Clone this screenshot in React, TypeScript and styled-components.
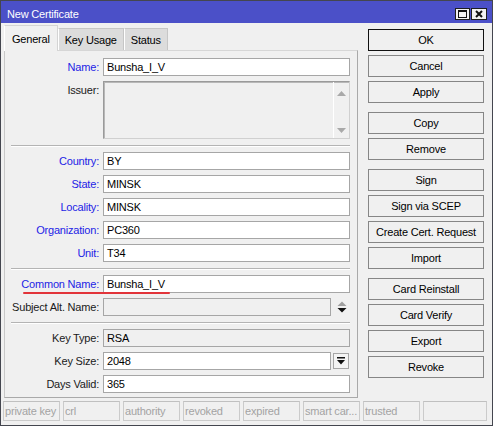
import styled, { createGlobalStyle } from 'styled-components';

const GlobalStyle = createGlobalStyle`
  html, body {
    margin: 0;
    padding: 0;
    background: #ffffff;
  }
  body {
    font-family: "Liberation Sans", Arial, sans-serif;
  }
`;

const Window = styled.div`
  width: 493px;
  height: 426px;
  box-sizing: border-box;
  border: 1px solid #44464f;
  background: #f0f0f0;
  display: flex;
  flex-direction: column;
  font-size: 11px;
  letter-spacing: -0.2px;
  color: #000;
  overflow: hidden;
`;

const TitleBar = styled.div`
  height: 22px;
  flex-shrink: 0;
  background: #4b50c8;
  display: flex;
  align-items: flex-end;
  padding: 0 5px 1px 6px;
  box-sizing: border-box;
`;

const TitleText = styled.div`
  flex: 1;
  color: #ffffff;
  font-size: 11px;
  line-height: 16px;
`;

const TitleButton = styled.div<{ $w?: number }>`
  width: ${(p) => p.$w ?? 15}px;
  height: 12px;
  box-sizing: border-box;
  border: 1px solid #1e1e1e;
  background: #f2f2f2;
  margin: 0 0 2px 1px;
  display: flex;
  align-items: center;
  justify-content: center;
`;

const Body = styled.div`
  flex: 1;
  display: flex;
  padding: 1px 0 0 3px;
`;

const LeftColumn = styled.div`
  width: 354px;
  display: flex;
  flex-direction: column;
`;

const TabStrip = styled.div`
  display: flex;
  align-items: flex-end;
  height: 26px;
`;

const Tab = styled.div<{ $active?: boolean }>`
  height: ${(p) => (p.$active ? 26 : 22)}px;
  box-sizing: border-box;
  padding: 0 ${(p) => (p.$active ? 7 : 6)}px;
  display: flex;
  align-items: center;
  justify-content: center;
  background: ${(p) => (p.$active ? '#f0f0f0' : '#dcdcdc')};
  border: 1px solid ${(p) => (p.$active ? '#d4d4d4' : '#c6c6c6')};
  border-bottom: none;
  border-left-color: #ffffff;
  position: relative;
  top: ${(p) => (p.$active ? 1 : 0)}px;
  z-index: ${(p) => (p.$active ? 1 : 0)};
  min-width: ${(p) => (p.$active ? 53 : 0)}px;
`;

const Panel = styled.div`
  height: 348px;
  box-sizing: border-box;
  border: 1px solid #a9a9a9;
  border-top-color: #d6d6d6;
  border-left-color: #c8c8c8;
  padding: 7px 7px 3px 6px;
  display: flex;
  flex-direction: column;
  gap: 5px;
`;

const Row = styled.div`
  display: grid;
  grid-template-columns: 88px 1fr;
  column-gap: 4px;
  align-items: center;
  position: relative;
`;

const TopRow = styled(Row)`
  align-items: start;
`;

const Label = styled.div<{ $blue?: boolean }>`
  text-align: right;
  white-space: nowrap;
  color: ${(p) => (p.$blue ? '#2323e6' : '#1a1a1a')};
  line-height: 18px;
`;

const Field = styled.div<{ $disabled?: boolean }>`
  height: 18px;
  box-sizing: border-box;
  border: 1px solid #a6a6a6;
  background: ${(p) => (p.$disabled ? '#f0f0f0' : '#ffffff')};
  padding: 0 3px;
  line-height: 16px;
  white-space: nowrap;
  overflow: hidden;
  flex: 1;
`;

const FieldGroup = styled.div`
  display: flex;
  align-items: center;
  gap: 2px;
`;

const SideBox = styled.div`
  width: 17px;
  height: 18px;
  display: flex;
  align-items: center;
  justify-content: center;
`;

const DropButton = styled.div`
  width: 16px;
  height: 16px;
  box-sizing: border-box;
  border: 1px solid #a6a6a6;
  background: #f4f4f4;
  display: flex;
  align-items: center;
  justify-content: center;
  margin-right: 1px;
`;

const IssuerBox = styled.div`
  height: 58px;
  box-sizing: border-box;
  border: 1px solid #9a9a9a;
  border-right-color: #d0d0d0;
  border-bottom-color: #d0d0d0;
  box-shadow: inset 1px 1px 0 #b8b8b8;
  background: #f0f0f0;
  display: flex;
  justify-content: flex-end;
`;

const ScrollTrack = styled.div`
  width: 15px;
  border-left: 1px solid #ffffff;
  display: flex;
  flex-direction: column;
  align-items: center;
  justify-content: space-between;
  padding: 9px 0 5px;
`;

const Separator = styled.div`
  height: 1px;
  margin: 1px 0;
  background: #b4b4b4;
  box-shadow: 0 1px 0 #ffffff;
`;

const Annotation = styled.div`
  position: absolute;
  left: 12px;
  top: 17px;
  width: 147px;
  height: 2px;
  background: #e2343a;
  border-radius: 1px;
`;

const RightColumn = styled.div`
  width: 116px;
  margin-left: 10px;
  padding-top: 5px;
  display: flex;
  flex-direction: column;
  gap: 9px;
`;

const ButtonGroup = styled.div`
  display: flex;
  flex-direction: column;
  gap: 4px;
`;

const Button = styled.div<{ $primary?: boolean }>`
  height: 22px;
  box-sizing: border-box;
  border: 1px solid ${(p) => (p.$primary ? '#111111' : '#868686')};
  background: #f0f0f0;
  display: flex;
  align-items: center;
  justify-content: center;
  white-space: nowrap;
`;

const StatusBar = styled.div`
  display: flex;
  gap: 3px;
  padding: 3px 0 4px 2px;
`;

const StatusCell = styled.div<{ $wide?: boolean }>`
  width: ${(p) => (p.$wide ? 64 : 57)}px;
  height: 20px;
  box-sizing: border-box;
  border: 1px solid #cbcbcb;
  border-top-color: #c0c0c0;
  color: #a3a3a3;
  padding-left: 1px;
  line-height: 18px;
  white-space: nowrap;
  overflow: hidden;
`;

const Tri = ({ dir, color }: { dir: 'up' | 'down'; color: string }) => (
  <svg width="9" height="5" viewBox="0 0 9 5">
    <path d={dir === 'up' ? 'M0 5 L4.5 0 L9 5 Z' : 'M0 0 L9 0 L4.5 5 Z'} fill={color} />
  </svg>
);

const fields1 = [
  { label: 'Country:', value: 'BY' },
  { label: 'State:', value: 'MINSK' },
  { label: 'Locality:', value: 'MINSK' },
  { label: 'Organization:', value: 'PC360' },
  { label: 'Unit:', value: 'T34' },
];

const buttonGroups = [
  ['OK', 'Cancel', 'Apply'],
  ['Copy', 'Remove'],
  ['Sign', 'Sign via SCEP', 'Create Cert. Request', 'Import'],
  ['Card Reinstall', 'Card Verify', 'Export', 'Revoke'],
];

const statusItems = ['private key', 'crl', 'authority', 'revoked', 'expired', 'smart car...', 'trusted'];

export default function App() {
  return (
    <>
      <GlobalStyle />
      <Window>
        <TitleBar>
          <TitleText>New Certificate</TitleText>
          <TitleButton>
            <svg width="9" height="8" viewBox="0 0 9 8">
              <rect x="0.5" y="0.5" width="8" height="7" fill="none" stroke="#111" />
              <rect x="0" y="0" width="9" height="2" fill="#111" />
            </svg>
          </TitleButton>
          <TitleButton $w={16}>
            <svg width="8" height="8" viewBox="0 0 8 8">
              <path d="M1 1 L7 7 M7 1 L1 7" stroke="#111" strokeWidth="2" />
            </svg>
          </TitleButton>
        </TitleBar>

        <Body>
          <LeftColumn>
            <TabStrip>
              <Tab $active>General</Tab>
              <Tab>Key Usage</Tab>
              <Tab>Status</Tab>
            </TabStrip>
            <Panel>
              <Row>
                <Label $blue>Name:</Label>
                <Field>Bunsha_I_V</Field>
              </Row>
              <TopRow>
                <Label>Issuer:</Label>
                <IssuerBox>
                  <ScrollTrack>
                    <Tri dir="up" color="#a9a9a9" />
                    <Tri dir="down" color="#a9a9a9" />
                  </ScrollTrack>
                </IssuerBox>
              </TopRow>
              <Separator />
              {fields1.map((f) => (
                <Row key={f.label}>
                  <Label $blue>{f.label}</Label>
                  <Field>{f.value}</Field>
                </Row>
              ))}
              <Separator />
              <Row>
                <Label $blue>Common Name:</Label>
                <Field>Bunsha_I_V</Field>
                <Annotation />
              </Row>
              <Row>
                <Label>Subject Alt. Name:</Label>
                <FieldGroup>
                  <Field $disabled />
                  <SideBox>
                    <svg width="10" height="12" viewBox="0 0 10 12">
                      <path d="M0.5 5 L5 0.5 L9.5 5 Z" fill="#a0a0a0" />
                      <path d="M0.5 7 L9.5 7 L5 11.5 Z" fill="#111" />
                    </svg>
                  </SideBox>
                </FieldGroup>
              </Row>
              <Separator />
              <Row>
                <Label>Key Type:</Label>
                <Field $disabled>RSA</Field>
              </Row>
              <Row>
                <Label>Key Size:</Label>
                <FieldGroup>
                  <Field>2048</Field>
                  <DropButton>
                    <svg width="8" height="8" viewBox="0 0 8 8">
                      <rect x="0" y="0" width="8" height="1.5" fill="#111" />
                      <path d="M0 3 L8 3 L4 7.5 Z" fill="#111" />
                    </svg>
                  </DropButton>
                </FieldGroup>
              </Row>
              <Row>
                <Label>Days Valid:</Label>
                <Field>365</Field>
              </Row>
            </Panel>
          </LeftColumn>

          <RightColumn>
            {buttonGroups.map((group, i) => (
              <ButtonGroup key={i}>
                {group.map((b) => (
                  <Button key={b} $primary={b === 'OK'}>
                    {b}
                  </Button>
                ))}
              </ButtonGroup>
            ))}
          </RightColumn>
        </Body>

        <StatusBar>
          {statusItems.map((s) => (
            <StatusCell key={s}>{s}</StatusCell>
          ))}
          <StatusCell $wide />
        </StatusBar>
      </Window>
    </>
  );
}
